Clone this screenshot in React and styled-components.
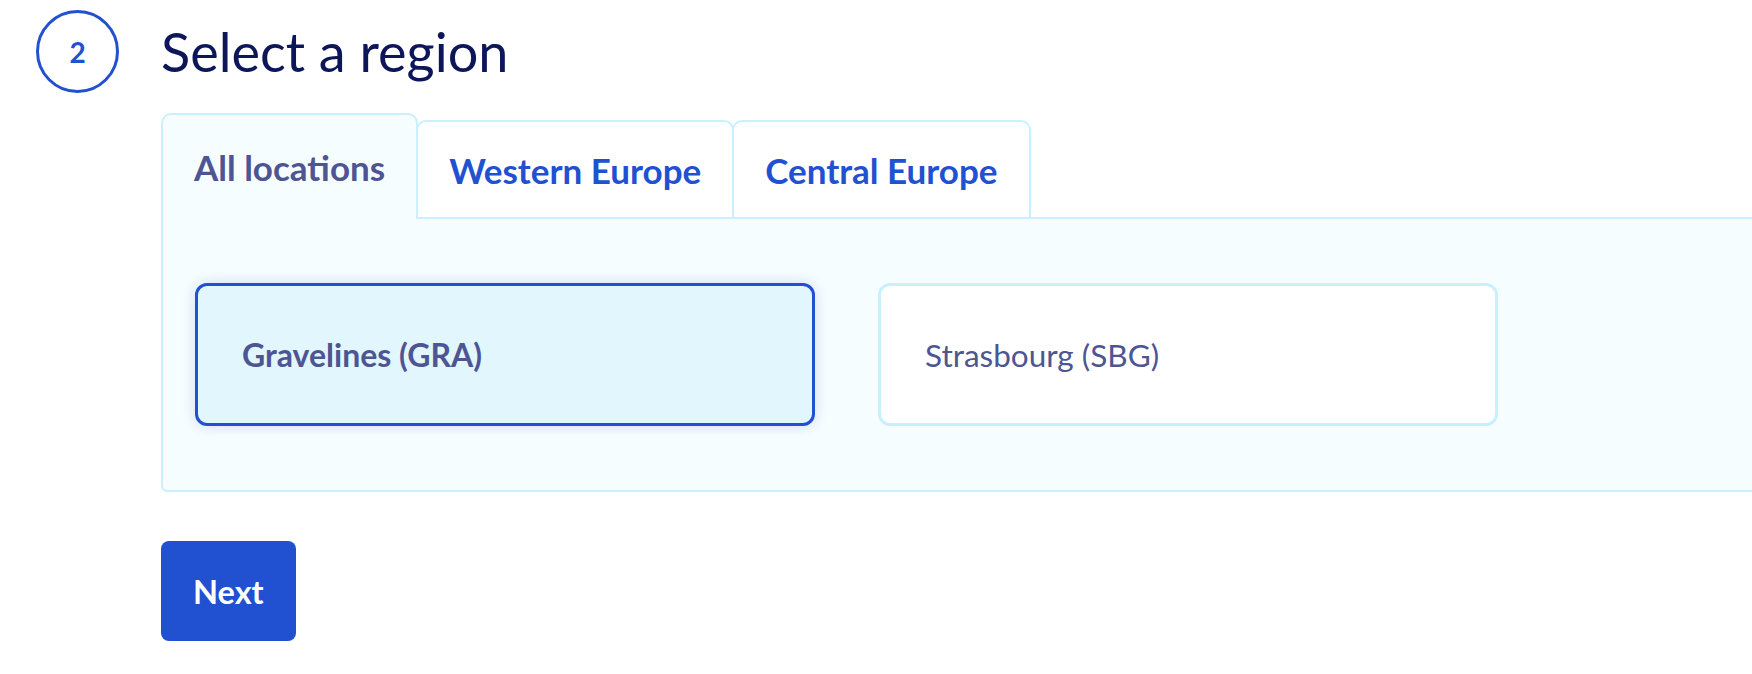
import React, { useState } from 'react';
import styled, { createGlobalStyle } from 'styled-components';

const GlobalStyle = createGlobalStyle`
  html, body {
    margin: 0;
    padding: 0;
    background: #ffffff;
    overflow: hidden;
  }

  body {
    font-family: Lato, 'Open Sans', sans-serif;
  }
`;

const Page = styled.div`
  padding: 10px 0 0 36px;
`;

const Step = styled.div`
  display: grid;
  grid-template-columns: 83px 1fr;
  column-gap: 42px;
  row-gap: 20px;
`;

const StepNumber = styled.div`
  width: 83px;
  height: 83px;
  box-sizing: border-box;
  border: 3px solid #2150d0;
  border-radius: 50%;
  display: flex;
  align-items: center;
  justify-content: center;
  color: #2150d0;
  font-size: 28px;
  font-weight: 700;
  line-height: 1;
`;

const Title = styled.h1`
  margin: 0;
  align-self: center;
  font-size: 54px;
  font-weight: 400;
  color: #0c1658;
  line-height: 1;
`;

const Content = styled.div`
  grid-column: 2;
  min-width: 0;
`;

const TabList = styled.div`
  display: flex;
  align-items: flex-end;
`;

const Tab = styled.button`
  box-sizing: border-box;
  height: ${props => (props.active ? '106px' : '97px')};
  margin-bottom: ${props => (props.active ? '-2px' : '0')};
  padding: 0 31px;
  display: flex;
  align-items: center;
  background: ${props => (props.active ? '#f5fdff' : '#ffffff')};
  border: 2px solid #c8f0fd;
  border-bottom: none;
  border-radius: 10px 10px 0 0;
  position: relative;
  z-index: ${props => (props.active ? 1 : 0)};
  font-family: inherit;
  font-size: 35px;
  font-weight: 700;
  color: ${props => (props.active ? '#4d5592' : '#2150d0')};
  cursor: pointer;

  & + & {
    margin-left: -2px;
  }
`;

const Panel = styled.div`
  width: calc(100% + 40px);
  box-sizing: border-box;
  background: #f5fdff;
  border: 2px solid #c8f0fd;
  border-radius: 0 0 0 6px;
  padding: 64px 32px;
`;

const RegionGrid = styled.div`
  display: grid;
  grid-template-columns: 620px 620px;
  column-gap: 63px;
`;

const RegionCard = styled.button`
  box-sizing: border-box;
  height: 143px;
  padding: 0 44px;
  display: flex;
  align-items: center;
  background: ${props => (props.selected ? '#e2f6fd' : '#ffffff')};
  border: 3px solid ${props => (props.selected ? '#2150d0' : '#c8f0fd')};
  border-radius: 12px;
  box-shadow: ${props => (props.selected ? '0 0 14px rgba(0, 14, 156, 0.14)' : 'none')};
  font-family: inherit;
  font-size: ${props => (props.selected ? '32px' : '31.5px')};
  font-weight: ${props => (props.selected ? 700 : 400)};
  color: #4d5592;
  cursor: pointer;
  text-align: left;
`;

const NextButton = styled.button`
  margin-top: 49px;
  height: 100px;
  padding: 0 32px;
  background: #2150d0;
  color: #ffffff;
  border: none;
  border-radius: 8px;
  font-family: inherit;
  font-size: 32.5px;
  font-weight: 700;
  cursor: pointer;
`;

const tabs = ['All locations', 'Western Europe', 'Central Europe'];

const regions = [
  { id: 'GRA', name: 'Gravelines (GRA)' },
  { id: 'SBG', name: 'Strasbourg (SBG)' },
];

const App = () => {
  const [activeTab, setActiveTab] = useState(0);
  const [selected, setSelected] = useState('GRA');

  return (
    <Page>
      <GlobalStyle />
      <Step>
        <StepNumber>2</StepNumber>
        <Title>Select a region</Title>
        <Content>
          <TabList>
            {tabs.map((label, index) => (
              <Tab
                key={label}
                active={index === activeTab}
                onClick={() => setActiveTab(index)}
              >
                {label}
              </Tab>
            ))}
          </TabList>
          <Panel>
            <RegionGrid>
              {regions.map(region => (
                <RegionCard
                  key={region.id}
                  selected={region.id === selected}
                  onClick={() => setSelected(region.id)}
                >
                  {region.name}
                </RegionCard>
              ))}
            </RegionGrid>
          </Panel>
          <NextButton>Next</NextButton>
        </Content>
      </Step>
    </Page>
  );
};

export default App;
